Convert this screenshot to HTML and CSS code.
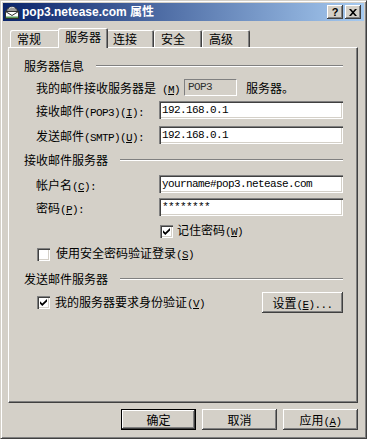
FILE: index.html
```html
<!DOCTYPE html>
<html lang="zh-CN">
<head>
<meta charset="utf-8">
<title>pop3.netease.com 属性</title>
<link rel="stylesheet" href="styles.css">
</head>
<body>
<div class="window">
  <div class="titlebar">
    <svg class="title-icon" width="16" height="16" viewBox="0 0 16 16">
      <path d="M2.5 7.5 C2.5 1.5 13.5 1.5 13.5 7.5 Z" fill="#9c9c9c" stroke="#303030" stroke-width="1"/>
      <path d="M5 4.5 C6 3.2 9 3 10.5 3.8" fill="none" stroke="#e8e8e8" stroke-width="1"/>
      <rect x="1.5" y="7.5" width="13" height="7" fill="#ffffff" stroke="#303030" stroke-width="1"/>
      <path d="M1.5 7.5 L8 11.5 L14.5 7.5" fill="none" stroke="#303030" stroke-width="1"/>
      <rect x="2" y="12.5" width="12" height="1.5" fill="#5a9a5a"/>
    </svg>
    <div class="title-text">pop3.netease.com 属性</div>
    <div class="title-btns">
      <div class="tbtn"><span class="q">?</span></div>
      <div class="tbtn">
        <svg width="8" height="7" viewBox="0 0 8 7"><path d="M0 0h2l2 2.3L6 0h2L5 3.5 8 7H6L4 4.7 2 7H0l3-3.5z" fill="#000"/></svg>
      </div>
    </div>
  </div>
  <div class="body">
    <div class="tabs">
      <div class="tab w50">常规</div>
      <div class="tab sel">服务器</div>
      <div class="tab w48">连接</div>
      <div class="tab w48">安全</div>
      <div class="tab w48">高级</div>
    </div>
    <div class="panel">
      <div class="group-head"><span>服务器信息</span><span class="hline"></span></div>
      <div class="row r-m">
        <span class="lbl-wide">我的邮件接收服务器是<span class="m"> (<u>M</u>)</span></span>
        <span class="static m">POP3</span>
        <span class="after">服务器。</span>
      </div>
      <div class="row r-i">
        <span class="lbl">接收邮件<span class="m">(POP3)(<u>I</u>):</span></span>
        <div class="edit m">192.168.0.1</div>
      </div>
      <div class="row r-u">
        <span class="lbl">发送邮件<span class="m">(SMTP)(<u>U</u>):</span></span>
        <div class="edit m">192.168.0.1</div>
      </div>
      <div class="group-head g2"><span>接收邮件服务器</span><span class="hline"></span></div>
      <div class="row r-c">
        <span class="lbl">帐户名<span class="m">(<u>C</u>):</span></span>
        <div class="edit m">yourname#pop3.netease.com</div>
      </div>
      <div class="row r-p">
        <span class="lbl">密码<span class="m">(<u>P</u>):</span></span>
        <div class="edit m">********</div>
      </div>
      <div class="chkrow r-rem">
        <span class="chk on"><svg width="7" height="7" viewBox="0 0 7 7"><path d="M0 2.2 L2.3 4.4 L7 0 L7 2.5 L2.3 7 L0 4.7 Z" fill="#000"/></svg></span>
        <span class="ctext rem">记住密码<span class="m">(<u>W</u>)</span></span>
      </div>
      <div class="chkrow r-spa">
        <span class="chk"></span>
        <span class="ctext">使用安全密码验证登录<span class="m">(<u>S</u>)</span></span>
      </div>
      <div class="group-head g3"><span>发送邮件服务器</span><span class="hline"></span></div>
      <div class="chkrow r-v">
        <span class="chk on"><svg width="7" height="7" viewBox="0 0 7 7"><path d="M0 2.2 L2.3 4.4 L7 0 L7 2.5 L2.3 7 L0 4.7 Z" fill="#000"/></svg></span>
        <span class="ctext v">我的服务器要求身份验证<span class="m">(<u>V</u>)</span></span>
        <div class="btn settings">设置<span class="m">(<u>E</u>)...</span></div>
      </div>
    </div>
    <div class="buttons">
      <div class="btn default">确定</div>
      <div class="btn">取消</div>
      <div class="btn">应用<span class="m">(<u>A</u>)</span></div>
    </div>
  </div>
</div>
</body>
</html>
```

FILE: styles.css
```css
* { box-sizing: border-box; }
html, body { margin: 0; padding: 0; }
body {
  width: 367px;
  height: 439px;
  overflow: hidden;
  background: #d4d0c8;
  font-family: "Noto Sans CJK SC", "Liberation Sans", sans-serif;
  font-size: 12px;
  color: #000;
}
.window {
  width: 367px;
  height: 439px;
  background: #d4d0c8;
  border: 1px solid;
  border-color: #d4d0c8 #404040 #404040 #d4d0c8;
  box-shadow: inset 1px 1px #ffffff, inset -1px -1px #808080;
  padding: 2px;
  display: flex;
  flex-direction: column;
}
.titlebar {
  height: 18px;
  flex: none;
  background: linear-gradient(to right, #0a246a, #a6caf0);
  display: flex;
  align-items: center;
  padding: 0 3px 0 1px;
}
.title-icon { flex: none; }
.title-text {
  flex: 1;
  margin-left: 2px;
  color: #fff;
  font-family: "Liberation Sans", "Noto Sans CJK SC", sans-serif;
  font-weight: bold;
  font-size: 12px;
  line-height: 18px;
  white-space: nowrap;
}
.title-btns { display: flex; gap: 2px; }
.tbtn {
  width: 16px;
  height: 14px;
  background: #d4d0c8;
  box-shadow: inset -1px -1px #404040, inset 1px 1px #ffffff, inset -2px -2px #808080;
  display: flex;
  align-items: center;
  justify-content: center;
}
.tbtn .q {
  font-family: "Liberation Sans", sans-serif;
  font-weight: bold;
  font-size: 11px;
  line-height: 12px;
}
.body {
  flex: 1;
  padding: 0 6px 0 5px;
  display: flex;
  flex-direction: column;
}
.tabs {
  height: 26px;
  flex: none;
  display: flex;
  align-items: flex-end;
  padding-left: 2px;
}
.tab {
  height: 17px;
  line-height: 17px;
  padding-left: 7px;
  background: #d4d0c8;
  border-radius: 2px 2px 0 0;
  box-shadow: inset 1px 1px #ffffff, inset -1px 0 #404040, inset -2px 0 #808080;
  white-space: nowrap;
}
.w50 { width: 50px; }
.w48 { width: 48px; }
.tab.sel {
  width: 50px;
  height: 20px;
  margin: 0 -2px -1px -2px;
  padding-bottom: 3px;
  z-index: 2;
}
.panel {
  height: 356px;
  width: 350px;
  flex: none;
  border: 1px solid;
  border-color: #ffffff #404040 #404040 #ffffff;
  box-shadow: inset -1px -1px #808080;
  padding: 11px 14px 0 15px;
}
.m {
  font-family: "Liberation Mono", monospace;
  font-size: 11px;
  letter-spacing: -0.6px;
  white-space: pre;
}
.group-head {
  height: 14px;
  display: flex;
  align-items: center;
  line-height: 14px;
}
.group-head.g2 { margin-top: 9px; }
.group-head.g3 { margin-top: 11px; }
.hline {
  flex: 1;
  height: 2px;
  margin-left: 12px;
  border-top: 1px solid #808080;
  border-bottom: 1px solid #ffffff;
}
.row {
  display: flex;
  align-items: center;
  height: 18px;
  padding-left: 12px;
  white-space: nowrap;
}
.r-m { margin-top: 5px; }
.r-i { margin-top: 5px; }
.r-u { margin-top: 7px; }
.r-c { margin-top: 8px; }
.r-p { margin-top: 5px; }
.lbl { width: 123px; flex: none; }
.lbl-wide { width: 148px; flex: none; }
.static {
  width: 53px;
  height: 17px;
  line-height: 15px;
  padding-left: 3px;
  color: #303030;
  border: 1px solid;
  border-color: #808080 #ffffff #ffffff #808080;
}
.after { margin-left: 9px; }
.edit {
  flex: 1;
  height: 18px;
  line-height: 18px;
  padding-left: 3px;
  background: #fff;
  box-shadow: inset 1px 1px #808080, inset 2px 2px #404040, inset -1px -1px #ffffff, inset -2px -2px #d4d0c8;
}
.chkrow {
  display: flex;
  align-items: center;
  height: 14px;
  padding-left: 13px;
  white-space: nowrap;
}
.r-rem { margin-top: 8px; padding-left: 136px; }
.r-spa { margin-top: 9px; }
.r-v { margin-top: 6px; height: 21px; }
.chk {
  width: 13px;
  height: 13px;
  flex: none;
  background: #fff;
  box-shadow: inset 1px 1px #808080, inset 2px 2px #404040, inset -1px -1px #ffffff, inset -2px -2px #d4d0c8;
  display: flex;
  align-items: center;
  justify-content: center;
}
.ctext { margin-left: 6px; line-height: 14px; }
.ctext.rem { margin-left: 4px; }
.ctext.v { margin-left: 5px; }
.btn {
  width: 75px;
  height: 21px;
  line-height: 21px;
  text-align: center;
  background: #d4d0c8;
  box-shadow: inset -1px -1px #404040, inset 1px 1px #ffffff, inset -2px -2px #808080;
  white-space: nowrap;
}
.btn.settings { width: 81px; margin-left: auto; }
.btn.default {
  border: 1px solid #000;
  line-height: 19px;
}
.buttons {
  margin-top: 6px;
  display: flex;
  justify-content: flex-end;
  gap: 6px;
}
```
